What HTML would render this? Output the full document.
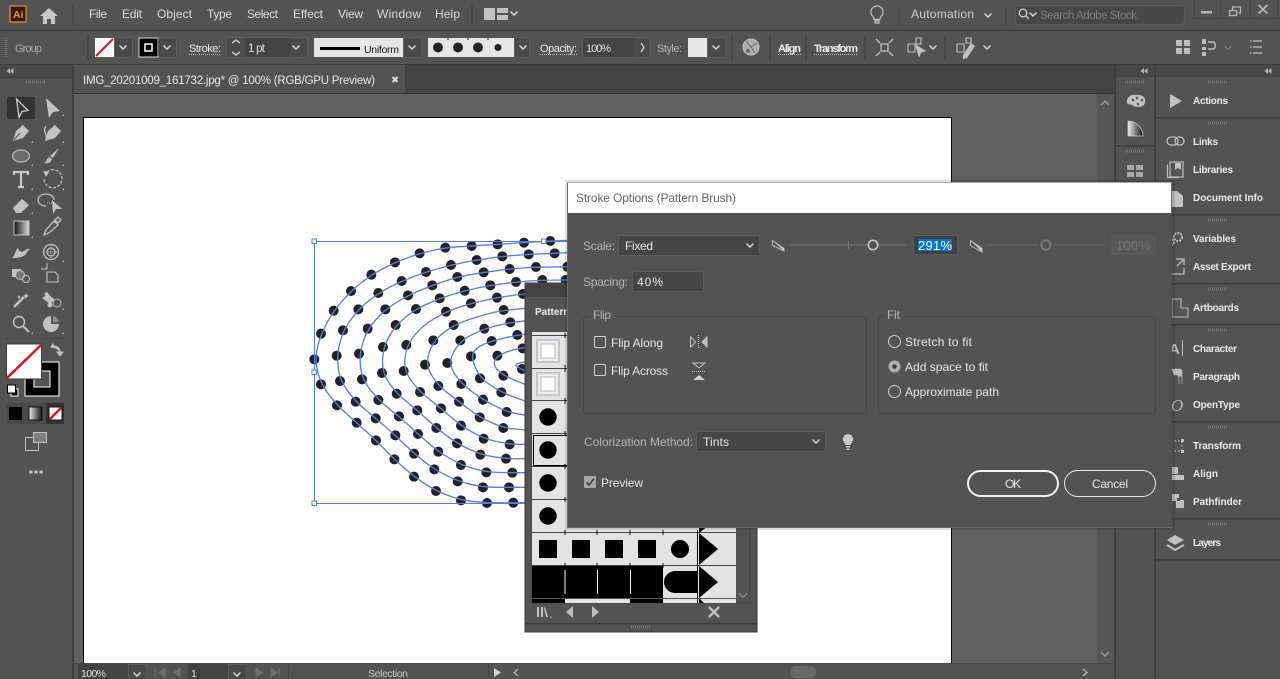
<!DOCTYPE html>
<html><head><meta charset="utf-8"><title>Stroke Options</title>
<style>
html,body{margin:0;padding:0;background:#535353;width:1280px;height:679px;overflow:hidden}
svg{display:block}
text{font-family:"Liberation Sans",sans-serif;font-size:12px;fill:#e2e2e2;white-space:pre}
.m{font-size:12px;fill:#dcdcdc}
.b{font-size:10px;font-weight:bold;fill:#eaeaea}
.d{font-size:12px;fill:#e6e6e6}
.l{font-size:12px;fill:#b4b4b4}
.ic{fill:#c2c2c2;stroke:none}
.st{fill:none;stroke:#c2c2c2;stroke-width:1.3}
.sep{stroke:#484848;stroke-width:2}
.box{fill:#454545;stroke:#5c5c5c;stroke-width:1}
.g{stroke:#c4c4c4;stroke-width:1;stroke-dasharray:1 1;fill:none}
</style></head><body>
<svg width="1280" height="679" viewBox="0 0 1280 679" xmlns="http://www.w3.org/2000/svg">
<defs>
<path id="c" d="M-3.5-1.5L0 2L3.5-1.5" fill="none" stroke="#d8d8d8" stroke-width="1.5"/>
<linearGradient id="gr" x1="0" x2="1" y1="0" y2="0"><stop offset="0" stop-color="#111"/><stop offset="1" stop-color="#ddd"/></linearGradient>
<linearGradient id="gw" x1="0" x2="1" y1="0" y2="0"><stop offset="0" stop-color="#eee"/><stop offset="1" stop-color="#111"/></linearGradient>
<g id="tri"><path d="M699 533L718 549L699 565Z" fill="#000"/></g>
</defs>

<!-- base -->
<rect width="1280" height="679" fill="#535353"/>
<!-- menu bar -->
<rect x="10" y="6" width="16" height="16" fill="#2b1a04" stroke="#f08a12" stroke-width="1.3"/>
<text x="13" y="18" style="font-size:10.5px;font-weight:bold;fill:#f59a23">Ai</text>
<path d="M40 16L49 8L58 16H55V24H51V19H47V24H43V16Z" fill="#c8c8c8"/>
<line x1="73" y1="5" x2="73" y2="25" class="sep"/>
<text class="m" x="89" y="18" textLength="18">File</text>
<text class="m" x="122" y="18" textLength="20">Edit</text>
<text class="m" x="157" y="18" textLength="35">Object</text>
<text class="m" x="207" y="18" textLength="25">Type</text>
<text class="m" x="247" y="18" textLength="31">Select</text>
<text class="m" x="293" y="18" textLength="30">Effect</text>
<text class="m" x="338" y="18" textLength="25">View</text>
<text class="m" x="377" y="18" textLength="44">Window</text>
<text class="m" x="435" y="18" textLength="25">Help</text>
<line x1="472" y1="5" x2="472" y2="25" class="sep"/>
<path d="M484 8H495V20H484ZM497 8H508V13H497ZM497 15H508V20H497Z" fill="#c2c2c2"/>
<use href="#c" x="514" y="13"/>
<path d="M877 6a6 6 0 0 1 4 10.500c-1 1-1 2-1 3h-6c0-1 0-2-1-3A6 6 0 0 1 877 6ZM875 21h4v2h-4Z" fill="none" stroke="#c2c2c2" stroke-width="1.200"/>
<line x1="899" y1="7" x2="899" y2="25" class="sep"/>
<text class="m" x="911" y="18" textLength="63" style="fill:#cfcfcf">Automation</text>
<use href="#c" x="988" y="15"/>
<line x1="1006" y1="7" x2="1006" y2="25" class="sep"/>
<rect x="1015.500" y="5.500" width="169" height="19" rx="3" fill="#474747" stroke="#5d5d5d"/>
<circle cx="1023" cy="13" r="3.800" fill="none" stroke="#cfcfcf" stroke-width="1.300"/><path d="M1026 16L1029 19" stroke="#cfcfcf" stroke-width="1.300"/>
<use href="#c" x="1033" y="14"/>
<text x="1040" y="19" textLength="97" style="font-size:11.500px;fill:#7e7e7e">Search Adobe Stock</text>
<path d="M1194.500 0V18.500H1220.500M1220.500 0V18.500H1250.500M1250.500 0V18.500H1277.500V0" fill="none" stroke="#474747"/>
<rect x="1201" y="11" width="11" height="2.500" fill="#b5b5b5"/>
<path d="M1229.500 10.500h7v5h-7zM1232.500 10v-3h8v6h-3" fill="none" stroke="#b5b5b5" stroke-width="1.300"/>
<path d="M1258.500 5L1267.500 13.500M1267.500 5L1258.500 13.500" stroke="#b5b5b5" stroke-width="1.800"/>
<rect y="30" width="1280" height="1" fill="#3a3a3a"/>

<!-- control bar -->
<path d="M6 38V57" stroke="#6c6c6c" stroke-width="3" stroke-dasharray="1 1"/>
<text x="15" y="52" style="font-size:11px;fill:#aaa" textLength="27">Group</text>
<line x1="88" y1="35" x2="88" y2="60" class="sep"/>
<rect x="95" y="38" width="19" height="19" fill="#fff"/><path d="M96 56L113 39" stroke="#e81010" stroke-width="2"/>
<rect x="114.500" y="37.500" width="18" height="20" rx="2" fill="#4a4a4a" stroke="#5e5e5e"/><use href="#c" x="123" y="47"/>
<rect x="139" y="38" width="19" height="19" fill="#000" stroke="#ddd" stroke-width="1"/><rect x="145" y="44" width="7" height="7" fill="none" stroke="#fff" stroke-width="1.500"/>
<rect x="158.500" y="37.500" width="18" height="20" rx="2" fill="#4a4a4a" stroke="#5e5e5e"/><use href="#c" x="167" y="47"/>
<text x="189" y="52" textLength="32" style="font-size:11px;fill:#e8e8e8">Stroke:</text><line x1="189" y1="54.500" x2="221" y2="54.500" class="g"/>
<rect x="226.500" y="37.500" width="81" height="20" rx="2" fill="#4a4a4a" stroke="#5e5e5e"/>
<rect x="245" y="38" width="45" height="19" fill="#434343"/>
<path d="M232 43L236 40L240 43M232 52L236 55L240 52" fill="none" stroke="#d8d8d8" stroke-width="1.300"/>
<text x="248" y="52" style="font-size:11.500px" textLength="17">1 pt</text>
<use href="#c" x="296" y="47"/>
<rect x="314" y="38" width="89" height="19" fill="#e6e6e6"/><rect x="320" y="47" width="40" height="3" fill="#000"/>
<text x="364" y="53" textLength="35" style="font-size:10.500px;fill:#111">Uniform</text>
<rect x="403.500" y="37.500" width="18" height="20" rx="2" fill="#4a4a4a" stroke="#5e5e5e"/><use href="#c" x="412" y="47"/>
<rect x="428" y="38" width="86" height="19" fill="#e6e6e6"/>
<circle cx="438" cy="47.500" r="5" fill="#222"/><circle cx="458" cy="47.500" r="5" fill="#222"/><circle cx="478" cy="47.500" r="5" fill="#222"/><circle cx="498" cy="47.500" r="3.500" fill="#222"/>
<path d="M448 38v2M468 38v2M488 38v2" stroke="#111"/>
<rect x="514.500" y="37.500" width="15" height="20" rx="2" fill="#4a4a4a" stroke="#5e5e5e"/><use href="#c" x="523" y="47"/>
<text x="540" y="52" textLength="37" style="font-size:11px;fill:#e8e8e8">Opacity:</text><line x1="540" y1="54.500" x2="577" y2="54.500" class="g"/>
<rect x="582.500" y="37.500" width="68" height="20" rx="2" fill="#4a4a4a" stroke="#5e5e5e"/><rect x="583" y="38" width="52" height="19" fill="#434343"/>
<text x="586" y="52" textLength="25" style="font-size:11px">100%</text>
<path d="M641 43L644 47.500L641 52" fill="none" stroke="#d8d8d8" stroke-width="1.300"/>
<text x="657" y="52" textLength="25" style="font-size:11px;fill:#b4b4b4">Style:</text>
<rect x="688" y="38" width="19" height="19" fill="#e6e6e6"/>
<rect x="707.500" y="37.500" width="18" height="20" rx="2" fill="#4a4a4a" stroke="#5e5e5e"/><use href="#c" x="716" y="47"/>
<line x1="732" y1="35" x2="732" y2="60" class="sep"/>
<circle cx="751" cy="47" r="8" fill="#adadad" stroke="#c4c4c4"/><path d="M751 47L746 41M751 47L757 43M751 47L755 53" stroke="#6a6a6a"/><circle cx="748" cy="51" r="2" fill="#666"/>
<line x1="770" y1="35" x2="770" y2="60" class="sep"/>
<text x="778" y="52" textLength="23" style="font-size:11px;fill:#ededed;font-weight:bold">Align</text><line x1="778" y1="54.500" x2="801" y2="54.500" class="g"/>
<line x1="806" y1="35" x2="806" y2="60" class="sep"/>
<text x="814" y="52" textLength="44" style="font-size:11px;fill:#ededed;font-weight:bold">Transform</text><line x1="814" y1="54.500" x2="858" y2="54.500" class="g"/>
<line x1="865" y1="35" x2="865" y2="60" class="sep"/>
<path d="M881 44h7v7h-7zM876 39l4 4M893 39l-4 4M876 56l4-4M893 56l-4-4" fill="none" stroke="#c2c2c2" stroke-width="1.300"/>
<path d="M908 44h7v8h-7zM916 38h5v6h-5z" fill="none" stroke="#c2c2c2" stroke-width="1.100"/><path d="M915 44L926 51L921 53L919 58Z" fill="#c2c2c2"/>
<use href="#c" x="933" y="47"/>
<line x1="945" y1="35" x2="945" y2="60" class="sep"/>
<path d="M957 44h7v8h-7zM966 38h5v5h-5z" fill="none" stroke="#c2c2c2" stroke-width="1.100"/><path d="M971 43L975 46L967 58L963 59L963 55Z" fill="#c2c2c2"/>
<use href="#c" x="987" y="47"/>
<path d="M1176 40h6v6h-6zM1184 40h6v6h-6zM1176 48h6v6h-6zM1184 48h6v6h-6z" fill="#bdbdbd"/>
<path d="M1202 39h4v5h-4zM1202 47h4v3h-4zM1202 52h4v4h-4z" fill="#bdbdbd"/><path d="M1208 42h5c3 0 3 7 0 7h-5" fill="none" stroke="#bdbdbd" stroke-width="1.500"/>
<path d="M1224.500 46L1228 49.500L1231.500 46" fill="none" stroke="#777" stroke-width="1.300"/>
<path d="M1250 41h1.500M1250 47h1.500M1250 53h1.500M1253 41h9M1253 47h9M1253 53h9" stroke="#c2c2c2" stroke-width="1.300"/>
<rect y="64" width="1280" height="1" fill="#3c3c3c"/>

<!-- tabs -->
<rect x="74" y="65" width="1040" height="29" fill="#424242"/>
<rect x="74" y="65" width="331" height="28" fill="#535353"/>
<text x="83" y="84" textLength="292" style="font-size:11.500px;fill:#e8e8e8">IMG_20201009_161732.jpg* @ 100% (RGB/GPU Preview)</text>
<path d="M392.500 77L397.500 82M397.500 77L392.500 82" stroke="#ddd" stroke-width="2"/>
<rect x="74" y="93" width="1040" height="1" fill="#333"/>

<!-- canvas -->
<rect x="74" y="94" width="1040" height="569" fill="#606060"/>
<rect x="83.500" y="117.500" width="868" height="560" fill="#fff" stroke="#000"/>
<rect x="1097" y="94" width="17" height="569" fill="#565656"/>
<path d="M1101 105L1105 101L1109 105M1101 652L1105 656L1109 652" fill="none" stroke="#9a9a9a" stroke-width="1.400"/>

<!-- artwork -->
<g transform="translate(300 230) scale(.33333)">
<path fill="none" stroke="#222" stroke-width="30" stroke-linecap="round" d="M751 33h0M672 38h0M593 43h0M515 48h0M436 53h0M359 70h0M285 97h0M214 134h0M153 183h0M101 242h0M63 311h0M43 388h0M63 463h0M111 526h0M170 578h0M228 631h0M283 688h0M342 740h0M408 783h0M483 811h0M561 819h0M640 818h0
M764 70h0M686 73h0M607 79h0M530 90h0M453 105h0M378 126h0M305 153h0M235 189h0M175 238h0M129 301h0M110 377h0M120 453h0M167 515h0M227 565h0M286 616h0M342 671h0M403 718h0M473 754h0M549 772h0M627 772h0
M802 110h0M708 111h0M629 117h0M551 127h0M472 141h0M397 166h0M324 196h0M256 238h0M203 296h0M177 371h0M186 448h0M235 510h0M297 559h0M354 612h0M415 665h0M483 705h0M559 727h0M637 728h0
M797 150h0M727 150h0M648 156h0M571 166h0M494 182h0M419 205h0M348 237h0M287 285h0M249 351h0M246 429h0M290 491h0M352 541h0M409 594h0M471 640h0M541 674h0M618 686h0
M669 192h0M591 203h0M513 220h0M438 245h0M319 345h0M311 423h0M360 486h0M423 535h0M483 587h0M551 626h0M629 643h0
M611 240h0M553 296h0M461 285h0M400 331h0M375 404h0M442 399h0M415 468h0M477 515h0M539 562h0M610 594h0
M631 277h0M575 333h0M481 331h0M513 379h0M484 462h0M549 509h0M620 546h0
M652 315h0M592 377h0M540 445h0M604 487h0M666 417h0M610 437h0M668 355h0"/>
<g id="rings" fill="none" stroke="#4f80ee" stroke-width="4" stroke-linejoin="round">
<polyline points="805,31 751,33 672,38 593,43 515,48 436,53 359,70 285,97 214,134 153,183 101,242 63,311 43,388 63,463 111,526 170,578 228,631 283,688 342,740 408,783 483,811 561,819 640,818 680,818"/>
<polyline points="805,68 764,70 686,73 607,79 530,90 453,105 378,126 305,153 235,189 175,238 129,301 110,377 120,453 167,515 227,565 286,616 342,671 403,718 473,754 549,772 627,772 680,772"/>
<polyline points="805,110 708,111 629,117 551,127 472,141 397,166 324,196 256,238 203,296 177,371 186,448 235,510 297,559 354,612 415,665 483,705 559,727 637,728 680,728"/>
<polyline points="805,150 727,150 648,156 571,166 494,182 419,205 348,237 287,285 249,351 246,429 290,491 352,541 409,594 471,640 541,674 618,686 680,686"/>
<polyline points="680,192 669,192 591,203 513,220 438,245 370,285 319,345 311,423 360,486 423,535 483,587 551,626 629,643 680,643"/>
<polyline points="680,235 611,240 537,258 461,285 400,331 375,404 415,468 477,515 539,562 610,594 680,600"/>
<polyline points="680,272 631,277 553,296 481,331 442,399 484,462 549,509 620,546 680,556"/>
<polyline points="680,312 652,315 575,333 530,352 512,379 540,445 604,487 680,515"/>
<polyline points="680,352 640,358 592,377 578,405 610,437 680,465"/>
<polyline points="680,395 650,400 645,407 680,425"/>
</g></g>
<rect x="314.500" y="241.500" width="300" height="262" fill="none" stroke="#4f80ee"/>
<g fill="#fff" stroke="#4f80ee"><rect x="312" y="239" width="4.500" height="4.500"/><rect x="541.500" y="239" width="4.500" height="4.500"/><rect x="312" y="370" width="4.500" height="4.500"/><rect x="312" y="501" width="4.500" height="4.500"/></g>

<!-- brushes panel -->
<rect x="525" y="283" width="232" height="349" fill="#535353" stroke="#3a3a3a"/>
<rect x="526" y="284" width="230" height="13" fill="#424242"/>
<text x="535" y="315" style="font-size:10px;font-weight:bold;fill:#eee">Pattern</text>
<rect x="532" y="332" width="218" height="271" fill="#525252" stroke="#454545"/>
<rect x="532" y="332" width="204" height="271" fill="#e3e3e3"/>
<path d="M532 335.500H736M532 368.500H736M532 400.500H736M532 433.500H736M532 466.500H736M532 499.500H736M532 532.500H736M532 565.500H736" stroke="#444"/>
<path d="M565 333v5M565 365v7M565 398v6M565 431v5M565 464v5M565 497v5M565 530v5M597 530v5M630 530v5M663 530v5M697.500 530v73M565 563v5M597 563v5M630 563v5M663 563v5" stroke="#111"/>
<g fill="#eee" stroke="#b8bdc2" stroke-width="1.500"><rect x="537" y="340" width="22" height="22"/><rect x="537" y="373" width="22" height="22"/></g>
<g fill="#fff" stroke="#b8bdc2"><rect x="541" y="344" width="14" height="14"/><rect x="541" y="377" width="14" height="14"/></g>
<circle cx="548" cy="417" r="8.700"/><circle cx="548" cy="450" r="8.700"/><circle cx="548" cy="483" r="8.700"/><circle cx="548" cy="516" r="8.700"/>
<rect x="533.500" y="435.500" width="70" height="30" fill="none" stroke="#000"/>
<rect x="539" y="540" width="18" height="18"/><rect x="572" y="540" width="18" height="18"/><rect x="605" y="540" width="18" height="18"/><rect x="638" y="540" width="18" height="18"/><circle cx="680" cy="549" r="9"/>
<use href="#tri"/><use href="#tri" y="33"/><path d="M699 520L708 526L699 533Z"/><path d="M699 598L704 603H699Z"/>
<path d="M532 566H663V598H532Z"/><path d="M565 570v24M597.500 570v24M630.500 570v24" stroke="#f4f4f4"/>
<path d="M697 571H675a11 11 0 0 0 0 22H697Z"/>
<path d="M532 599H565V603H532ZM630 599H663V603H630Z"/>
<path d="M532 598.500H736" stroke="#555"/>
<path d="M739 593.500L743 597.500L747 593.500" fill="none" stroke="#8a8a8a" stroke-width="1.300"/>
<path d="M537 607h2v10h-2zM541 607h2v10h-2zM545 607l3 10h-2l-2-9Z" fill="#c2c2c2"/><circle cx="551" cy="617" r=".8" fill="#c2c2c2"/>
<path d="M566 612L573 606V618ZM599 612L592 606V618Z" fill="#bdbdbd"/>
<path d="M709 607L719 617M719 607L709 617" stroke="#bdbdbd" stroke-width="2.500"/>
<rect x="526" y="623" width="230" height="1.500" fill="#3c3c3c"/>
<path d="M631 627H650" stroke="#777" stroke-width="3" stroke-dasharray="1 1"/>

<!-- left toolbar -->
<rect x="0" y="65" width="72" height="598" fill="#535353"/>
<rect x="0" y="65" width="72" height="12" fill="#474747"/>
<rect x="72" y="65" width="2" height="614" fill="#3f3f3f"/>
<rect x="0" y="663" width="72" height="16" fill="#535353"/>
<rect x="0" y="77" width="72" height="1" fill="#3e3e3e"/>
<path d="M10 68L6.500 71L10 74ZM13.500 68L10 71L13.500 74Z" fill="#b5b5b5"/>
<path d="M26 82H45" stroke="#777" stroke-width="3" stroke-dasharray="1 1"/>
<rect x="7" y="97" width="28" height="22" rx="2" fill="#333"/>
<path d="M16.500 99L28 110.500L22 111.500L19 117.500Z" fill="none" stroke="#ccc" stroke-width="1.300"/>
<path d="M46 98L60 111L53 112L49 118Z" class="ic"/>
<path d="M13 141L16 131L23 125L29 131L23 138Z" class="ic"/><path d="M14 140L20 133" stroke="#535353"/>
<path d="M45 141L48 131L55 125L61 131L55 138Z" class="ic"/><path d="M46 126c-4 6 2 8 0 13" class="st"/>
<ellipse cx="21" cy="156" rx="8.500" ry="6" fill="#6c6c6c" stroke="#b8b8b8" stroke-width="1.300"/>
<path d="M59 148L53 158L50 156ZM49 157L52 159C51 163 47 164 44 163C47 162 46 159 49 157Z" class="ic"/>
<path d="M14 175V172H28V175M21 172V187M18 187H24" fill="none" stroke="#c8c8c8" stroke-width="2.200"/>
<path d="M47 172a9 9 0 1 1-3 7" fill="none" stroke="#bdbdbd" stroke-width="1.300" stroke-dasharray="3 1.500"/><path d="M43 171l6 1-3 5Z" class="ic"/>
<path d="M13 208L22 199L29 205L21 213H16Z" class="ic"/>
<path d="M46 206a8 6 0 1 1 8-6" class="st"/><path d="M52 200L62 209L56 209L53 214Z" class="ic"/><path d="M47 203h5" stroke="#ccc" stroke-dasharray="1 1"/>
<rect x="14" y="221" width="15" height="14" fill="url(#gr)" stroke="#c2c2c2"/>
<path d="M44 235l2-5 8-9 4 4-9 8ZM55 220l3-3 3 3-3 3Z" fill="none" stroke="#c2c2c2" stroke-width="1.300"/>
<path d="M12 258c3-2 3-7 6-10c1 3 3 5 6 3c2-1 3-3 6-2c-3 2-3 4-5 6c-4 3-9 3-13 3Z" class="ic"/>
<circle cx="51" cy="252" r="7.500" class="st"/><circle cx="51" cy="252" r="4" class="st"/><path d="M44 252H58M51 245V259" stroke="#bbb" stroke-dasharray="1 1"/>
<rect x="12" y="269" width="9" height="8" class="ic"/><circle cx="20" cy="275" r="4.500" fill="#777" stroke="#c2c2c2"/><circle cx="26" cy="279" r="3.500" fill="none" stroke="#c2c2c2"/>
<path d="M41 269h6M47 263v6M47 272h8l3 3v7H47Z" fill="none" stroke="#c2c2c2" stroke-width="1.100"/>
<path d="M14 307L24 297" stroke="#c2c2c2" stroke-width="2.500"/><path d="M26 293l1 2 2 1-2 1-1 2-1-2-2-1 2-1ZM19 295l.7 1.300 1.300.7-1.300.7-.7 1.300-.7-1.300L17 297l1.300-.7Z" class="ic"/>
<path d="M42 298l6-4 7 6-5 4ZM44 294l3-2 2 2-3 2Z" class="ic"/><circle cx="57" cy="303" r="4" fill="none" stroke="#c2c2c2"/><circle cx="50" cy="305" r="2.500" class="ic"/>
<circle cx="19" cy="322" r="5.500" fill="none" stroke="#c2c2c2" stroke-width="1.400"/><path d="M23 326L29 332" stroke="#c2c2c2" stroke-width="2"/>
<path d="M51 316a8 8 0 1 0 8 8H51Z" class="ic"/><path d="M53 316a8 8 0 0 1 6 6h-6Z" fill="#8d8d8d"/>
<g fill="#bbb"><path d="M62 116h2v-2z"/><path d="M31 143h2v-2zM62 143h2v-2zM31 166h2v-2zM62 166h2v-2zM31 190h2v-2zM62 190h2v-2zM31 214h2v-2zM31 238h2v-2zM62 262h2v-2zM31 334h2v-2zM62 310h2v-2zM62 334h2v-2z"/></g>
<line x1="5" y1="338.500" x2="66" y2="338.500" stroke="#484848"/>
<rect x="25" y="362" width="34" height="34" fill="#000" stroke="#fff" stroke-width="1"/>
<rect x="34" y="371" width="16" height="16" fill="#535353" stroke="#fff"/>
<rect x="6.500" y="344" width="35" height="35" fill="#fff" stroke="#3a3a3a"/>
<path d="M7 378L41 345" stroke="#e81010" stroke-width="2.500"/>
<path d="M53 344l-2 3 4 1ZM53 346c5 0 7 2 7 6M60 356l-3-4 6 0Z" fill="#c2c2c2" stroke="#c2c2c2"/>
<rect x="11" y="389" width="7" height="7" fill="#000" stroke="#fff"/><rect x="7.500" y="385" width="8" height="8" fill="#fff" stroke="#000"/>
<rect x="6" y="403" width="58" height="21" fill="#4a4a4a"/><rect x="46" y="403" width="18" height="21" fill="#333"/>
<rect x="9" y="407" width="13" height="13" fill="#000"/>
<rect x="29" y="407" width="13" height="13" fill="url(#gw)" stroke="#111"/>
<rect x="49" y="407" width="13" height="13" fill="#fff" stroke="#111"/><path d="M50 419L61 408" stroke="#e81010" stroke-width="2.500"/>
<path d="M25.500 437.500h13v13h-13z" fill="#535353" stroke="#c2c2c2"/><path d="M33.500 432.500h13v10h-13z" fill="#7c7c7c" stroke="#c2c2c2"/>
<g fill="#bdbdbd"><circle cx="31" cy="472" r="1.800"/><circle cx="36" cy="472" r="1.800"/><circle cx="41" cy="472" r="1.800"/></g>

<!-- right docks -->
<rect x="1114" y="65" width="166" height="614" fill="#535353"/>
<rect x="1114" y="65" width="166" height="12" fill="#474747"/>
<rect x="1114" y="65" width="2" height="614" fill="#3f3f3f"/>
<rect x="1154" y="65" width="2" height="614" fill="#3f3f3f"/>
<path d="M1144 68L1140.500 71L1144 74ZM1147.500 68L1144 71L1147.500 74ZM1268 68L1264.500 71L1268 74ZM1271.500 68L1268 71L1271.500 74Z" fill="#b5b5b5"/>
<g stroke="#777" stroke-width="3" stroke-dasharray="1 1" fill="none"><path d="M1125 82H1144M1208 82H1227M1125 151H1144M1208 123H1227M1208 220H1227M1208 289H1227M1208 330H1227M1208 427H1227M1208 524H1227"/></g>
<g fill="#3e3e3e"><rect x="1116" y="145" width="38" height="1.500"/><rect x="1156" y="117" width="124" height="1.500"/><rect x="1156" y="214" width="124" height="1.500"/><rect x="1156" y="283" width="124" height="1.500"/><rect x="1156" y="324" width="124" height="1.500"/><rect x="1156" y="421" width="124" height="1.500"/><rect x="1156" y="518" width="124" height="1.500"/><rect x="1156" y="559" width="124" height="1.500"/></g>
<path d="M1127 103c-1-6 4-9 11-8c5 0 8 3 7 7c0 4-4 5-7 5c-3 0-4-1-6-2c-2-1-4 0-5-2Z" class="ic"/><g fill="#535353"><circle cx="1133" cy="100" r="1.300"/><circle cx="1137" cy="98" r="1.300"/><circle cx="1142" cy="100" r="1.300"/><circle cx="1138" cy="104" r="1.300"/></g>
<path d="M1128 121c8 0 15 7 15 15H1128Z" fill="url(#gw)" stroke="#ccc" stroke-width=".8"/>
<path d="M1127 165h7v5h-7zM1136 165h7v5h-7zM1127 172h7v5h-7zM1136 172h7v5h-7z" fill="#a8a8a8"/>
<path d="M1170 94L1182 101L1170 108Z" class="ic"/>
<g style="fill:none"><rect x="1167" y="137" width="11" height="8" rx="4" class="st"/><rect x="1175" y="137" width="9" height="8" rx="4" class="st"/></g>
<path d="M1167.500 164.500v13h11M1170 162h13v15h-13z" fill="none" stroke="#bdbdbd" stroke-width="1.200"/><path d="M1175 163h6v7l-3-2-3 2Z" class="ic"/>
<path d="M1168 191h9l6 5v11h-15Z" class="ic"/>
<circle cx="1178" cy="237" r="4" fill="none" stroke="#bdbdbd" stroke-width="2" stroke-dasharray="2 1"/><circle cx="1171" cy="242" r="3" fill="none" stroke="#bdbdbd" stroke-width="2" stroke-dasharray="2 1"/>
<path d="M1176 259h8v6M1183 260l-6 6M1170 262h-3v12h17v-6" fill="none" stroke="#bdbdbd" stroke-width="1.300"/>
<path d="M1172 299h9v9h7v9h-16Z" fill="none" stroke="#bdbdbd" stroke-width="1"/>
<text x="1169" y="354" style="font-size:15px;font-weight:bold;fill:#bbb">A</text><line x1="1182.500" y1="340" x2="1182.500" y2="356" stroke="#bdbdbd"/>
<path d="M1172 369h9v7h-3v-1h-4ZM1178 370h1v14M1181 370h1v14" fill="#bdbdbd" stroke="#bdbdbd" stroke-width=".6"/>
<text x="1171" y="411" style="font-size:17px;font-style:italic;font-family:'Liberation Serif',serif;fill:#bbb">O</text>
<path d="M1170 441h12v10h-12z" fill="none" stroke="#bdbdbd" stroke-dasharray="2 2"/><path d="M1168 439h3v3h-3zM1181 439h3v3h-3zM1168 450h3v3h-3zM1181 450h3v3h-3z" class="ic"/>
<path d="M1172 467h6v7h-6zM1172 475h12v5h-12z" class="ic"/>
<rect x="1172" y="494" width="7" height="7" class="ic"/><rect x="1176" y="500" width="8" height="8" fill="#bdbdbd"/><rect x="1177" y="498" width="3" height="3" fill="#535353"/>
<path d="M1167 540L1175 535L1184 540L1175 545Z" class="ic"/><path d="M1167 545L1175 550L1184 545" fill="none" stroke="#c2c2c2" stroke-width="2"/>
<text class="b" x="1193" y="104" textLength="35">Actions</text>
<text class="b" x="1193" y="145" textLength="25">Links</text>
<text class="b" x="1193" y="173" textLength="40">Libraries</text>
<text class="b" x="1193" y="201" textLength="70">Document Info</text>
<text class="b" x="1193" y="242" textLength="43">Variables</text>
<text class="b" x="1193" y="270" textLength="58">Asset Export</text>
<text class="b" x="1193" y="311" textLength="46">Artboards</text>
<text class="b" x="1193" y="352" textLength="44">Character</text>
<text class="b" x="1193" y="380" textLength="47">Paragraph</text>
<text class="b" x="1193" y="408" textLength="47">OpenType</text>
<text class="b" x="1193" y="449" textLength="48">Transform</text>
<text class="b" x="1193" y="477" textLength="25">Align</text>
<text class="b" x="1193" y="505" textLength="49">Pathfinder</text>
<text class="b" x="1193" y="546" textLength="28">Layers</text>

<!-- status bar -->
<rect x="74" y="663" width="1040" height="16" fill="#535353"/>
<rect x="74" y="663" width="1040" height="1" fill="#484848"/>
<rect x="78" y="664" width="50" height="15" fill="#424242"/><rect x="128.500" y="664.500" width="18" height="15" fill="#4a4a4a" stroke="#5c5c5c"/><use href="#c" x="137" y="674"/>
<text x="81" y="677" textLength="25" style="font-size:10.500px">100%</text>
<path d="M155 668v9M165 668l-6 4.500 6 4.500ZM180 668l-6 4.500 6 4.500Z" fill="#6f6f6f" stroke="#6f6f6f"/>
<rect x="188" y="664" width="40" height="15" fill="#424242"/><rect x="228.500" y="664.500" width="18" height="15" fill="#4a4a4a" stroke="#5c5c5c"/><use href="#c" x="237" y="674"/>
<text x="191" y="677" style="font-size:10.500px">1</text>
<path d="M256 668l6 4.500-6 4.500ZM271 668l6 4.500-6 4.500ZM279 668v9" fill="#6f6f6f" stroke="#6f6f6f"/>
<line x1="288.500" y1="665" x2="288.500" y2="679" stroke="#474747"/>
<text x="368" y="677" textLength="40" style="font-size:10.500px;fill:#c4c4c4">Selection</text>
<line x1="488.500" y1="665" x2="488.500" y2="679" stroke="#474747"/>
<path d="M494 668L501 672.500L494 677Z" fill="#cfcfcf"/>
<path d="M518 669L514 672.500L518 676" fill="none" stroke="#b5b5b5" stroke-width="1.300"/>
<rect x="790" y="666" width="26" height="12" rx="6" fill="#696969"/>
<path d="M1083 669L1087 672.500L1083 676" fill="none" stroke="#b5b5b5" stroke-width="1.300"/>

<!-- dialog -->
<rect x="565" y="180" width="610" height="350" fill="#000" opacity=".12"/>
<rect x="567" y="182" width="605" height="346" fill="#6a6a6a"/>
<rect x="567" y="182" width="605" height="1" fill="#a8a8a8"/>
<rect x="568" y="183" width="603" height="30" fill="#fff"/>
<rect x="568" y="213" width="604" height="314" fill="#535353"/>
<text x="576" y="202" textLength="160" style="font-size:12px;fill:#666">Stroke Options (Pattern Brush)</text>

<text class="l" x="583" y="250" textLength="32">Scale:</text>
<rect x="618.500" y="235.500" width="141" height="20" rx="2" class="box"/>
<text class="d" x="625" y="250" textLength="28">Fixed</text>
<use href="#c" x="750" y="245"/>
<path d="M772.500 240.500L784 248.500V251L772.500 245.500Z" fill="none" stroke="#bdbdbd"/><path d="M772 240L784 248.500V251Z" fill="#c8c8c8"/>
<path d="M789 245H867M878 245H907M848.500 241V249" stroke="#7a7a7a" stroke-width="1"/>
<circle cx="873" cy="245" r="4.700" fill="#535353" stroke="#c8c8c8" stroke-width="1.700"/>
<rect x="913.500" y="235.500" width="44" height="19" rx="2" fill="#3f3f3f" stroke="#5c5c5c"/>
<rect x="918" y="239" width="34" height="12" fill="#0a74d6"/>
<text x="918" y="250" textLength="34" style="font-size:13px;fill:#fff">291%</text>
<path d="M970.500 240.500L982 248.500V252L970.500 245.500Z" fill="none" stroke="#bdbdbd"/><path d="M970 240L982 248.500V252Z" fill="#c8c8c8"/>
<path d="M987 245H1038M1054 245H1105" stroke="#686868"/>
<circle cx="1046" cy="245" r="4.700" fill="#535353" stroke="#7c7c7c" stroke-width="1.800"/>
<rect x="1111" y="235" width="45" height="20" rx="1" fill="#595959"/>
<text x="1116" y="250" textLength="34" style="font-size:13px;fill:#747474">100%</text>

<text class="l" x="583" y="286" textLength="45">Spacing:</text>
<rect x="632.500" y="271.500" width="71" height="20" rx="2" class="box"/>
<text class="d" x="637" y="286" textLength="26">40%</text>

<rect x="583.500" y="316.500" width="283" height="97" rx="3" fill="none" stroke="#474747"/>
<rect x="590" y="308" width="24" height="14" fill="#535353"/>
<text class="l" x="593" y="319" textLength="18">Flip</text>
<rect x="594.500" y="336.500" width="11" height="11" rx="1" fill="none" stroke="#cfcfcf"/>
<text class="d" x="611" y="347" textLength="52">Flip Along</text>
<path d="M690.500 337v10l5-5ZM707 337v10l-5-5Z" fill="none" stroke="#c2c2c2"/><path d="M707 337v10l-5-5Z" fill="#c2c2c2"/><path d="M698.500 335V349" stroke="#ccc" stroke-dasharray="1 1"/>
<rect x="594.500" y="364.500" width="11" height="11" rx="1" fill="none" stroke="#cfcfcf"/>
<text class="d" x="611" y="375" textLength="57">Flip Across</text>
<path d="M693 363h12l-6 5Z" fill="none" stroke="#c2c2c2"/><path d="M693 380h12l-6-5Z" fill="#d0d0d0"/><path d="M692 371.500H706" stroke="#ccc" stroke-dasharray="1 1"/>

<rect x="878.500" y="316.500" width="277" height="97" rx="3" fill="none" stroke="#474747"/>
<rect x="884" y="308" width="20" height="14" fill="#535353"/>
<text class="l" x="887" y="319" textLength="13">Fit</text>
<circle cx="894.500" cy="341.500" r="6" fill="none" stroke="#cfcfcf"/>
<text class="d" x="905" y="346" textLength="67">Stretch to fit</text>
<circle cx="894.500" cy="366.500" r="6" fill="#b0b0b0"/><circle cx="894.500" cy="366.500" r="2.300" fill="#3a3a3a"/>
<text class="d" x="905" y="371" textLength="83">Add space to fit</text>
<circle cx="894.500" cy="391.500" r="6" fill="none" stroke="#cfcfcf"/>
<text class="d" x="905" y="396" textLength="94">Approximate path</text>

<text class="l" x="584" y="446" textLength="109">Colorization Method:</text>
<rect x="696.500" y="431.500" width="129" height="20" rx="2" class="box"/>
<text class="d" x="703" y="446" textLength="26">Tints</text>
<use href="#c" x="816" y="441"/>
<path d="M848 434a5 5 0 0 1 4 8l-1.500 3h-5l-1.500-3a5 5 0 0 1 4-8ZM846 446h4v1.500h-4ZM846.500 448.500h3v1.500h-3Z" fill="#c8c8c8"/>

<rect x="584" y="476" width="12" height="12" rx="1" fill="#a8a8a8"/>
<path d="M586.500 482L589 485L594 478.500" fill="none" stroke="#444" stroke-width="1.700"/>
<text class="d" x="601" y="487" textLength="42">Preview</text>
<rect x="968" y="471" width="90" height="25" rx="12.500" fill="none" stroke="#f2f2f2" stroke-width="2"/>
<text class="d" x="1005" y="488" textLength="16">OK</text>
<rect x="1064.500" y="470.500" width="91" height="26" rx="13" fill="none" stroke="#e8e8e8" stroke-width="1"/>
<text class="d" x="1092" y="488" textLength="36">Cancel</text>
</svg>
<script>
(function(){
  var g=document.getElementById('rings');
  var ps=[].slice.call(g.querySelectorAll('polyline'));
  ps.forEach(function(p){
    var a=p.getAttribute('points').trim().split(/\s+/).map(function(s){return s.split(',').map(Number)});
    var d='M'+a[0][0]+' '+a[0][1];
    for(var i=1;i<a.length-1;i++){
      var mx=(a[i][0]+a[i+1][0])/2,my=(a[i][1]+a[i+1][1])/2;
      d+='Q'+a[i][0]+' '+a[i][1]+' '+mx+' '+my;
    }
    var l=a[a.length-1];d+='L'+l[0]+' '+l[1];
    var n=document.createElementNS('http://www.w3.org/2000/svg','path');
    n.setAttribute('d',d);g.replaceChild(n,p);
  });
})();
</script>
</body></html>
